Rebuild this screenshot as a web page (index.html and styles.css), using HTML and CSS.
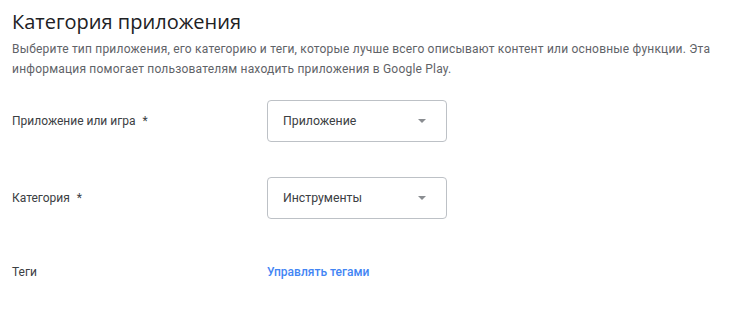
FILE: index.html
```html
<!DOCTYPE html>
<html lang="ru">
<head>
<meta charset="utf-8">
<link rel="stylesheet" href="styles.css">
</head>
<body>
<section class="page">
  <h1 class="title">Категория приложения</h1>
  <p class="desc">Выберите тип приложения, его категорию и теги, которые лучше всего описывают контент или основные функции. Эта информация помогает пользователям находить приложения в Google Play.</p>

  <div class="row row-type">
    <div class="label">Приложение или игра <span class="req">*</span></div>
    <div class="select">
      <span class="value">Приложение</span>
      <span class="arrow"></span>
    </div>
  </div>

  <div class="row row-cat">
    <div class="label">Категория <span class="req">*</span></div>
    <div class="select">
      <span class="value">Инструменты</span>
      <span class="arrow"></span>
    </div>
  </div>

  <div class="row row-tags">
    <div class="label">Теги</div>
    <a class="link" href="#">Управлять тегами</a>
  </div>
</section>
</body>
</html>
```

FILE: styles.css
```css
html, body {
  margin: 0;
  padding: 0;
  background: #ffffff;
}

.page {
  padding: 9px 12px 0 12px;
  font-family: Roboto, "Noto Sans", Arial, sans-serif;
  color: #3c4043;
}

.title {
  margin: 0;
  font-family: "Open Sans", Roboto, sans-serif;
  font-weight: 400;
  font-size: 20px;
  line-height: 26px;
  color: #202124;
}

.desc {
  margin: 4px 0 0 0;
  font-size: 12px;
  line-height: 20px;
  letter-spacing: 0.2px;
  color: #5f6368;
  max-width: 726px;
}

.row {
  display: grid;
  grid-template-columns: 255px 180px;
  align-items: center;
}

.row-type { margin-top: 21px; }
.row-cat { margin-top: 35px; }
.row-tags { margin-top: 43px; }

.label {
  font-size: 12px;
  color: #3c4043;
}

.req {
  margin-left: 4px;
}

.select {
  height: 40px;
  border: 1px solid #bdc1c6;
  border-radius: 4px;
  display: flex;
  align-items: center;
  justify-content: space-between;
  padding: 0 20px 0 15px;
  font-size: 12.3px;
  color: #3c4043;
}

.arrow {
  width: 0;
  height: 0;
  border-left: 4px solid transparent;
  border-right: 4px solid transparent;
  border-top: 4px solid #8a8d91;
}

.row-tags .label {
  line-height: 20px;
}

.link {
  font-size: 12px;
  font-weight: 500;
  color: #4285f4;
  text-decoration: none;
}
```
